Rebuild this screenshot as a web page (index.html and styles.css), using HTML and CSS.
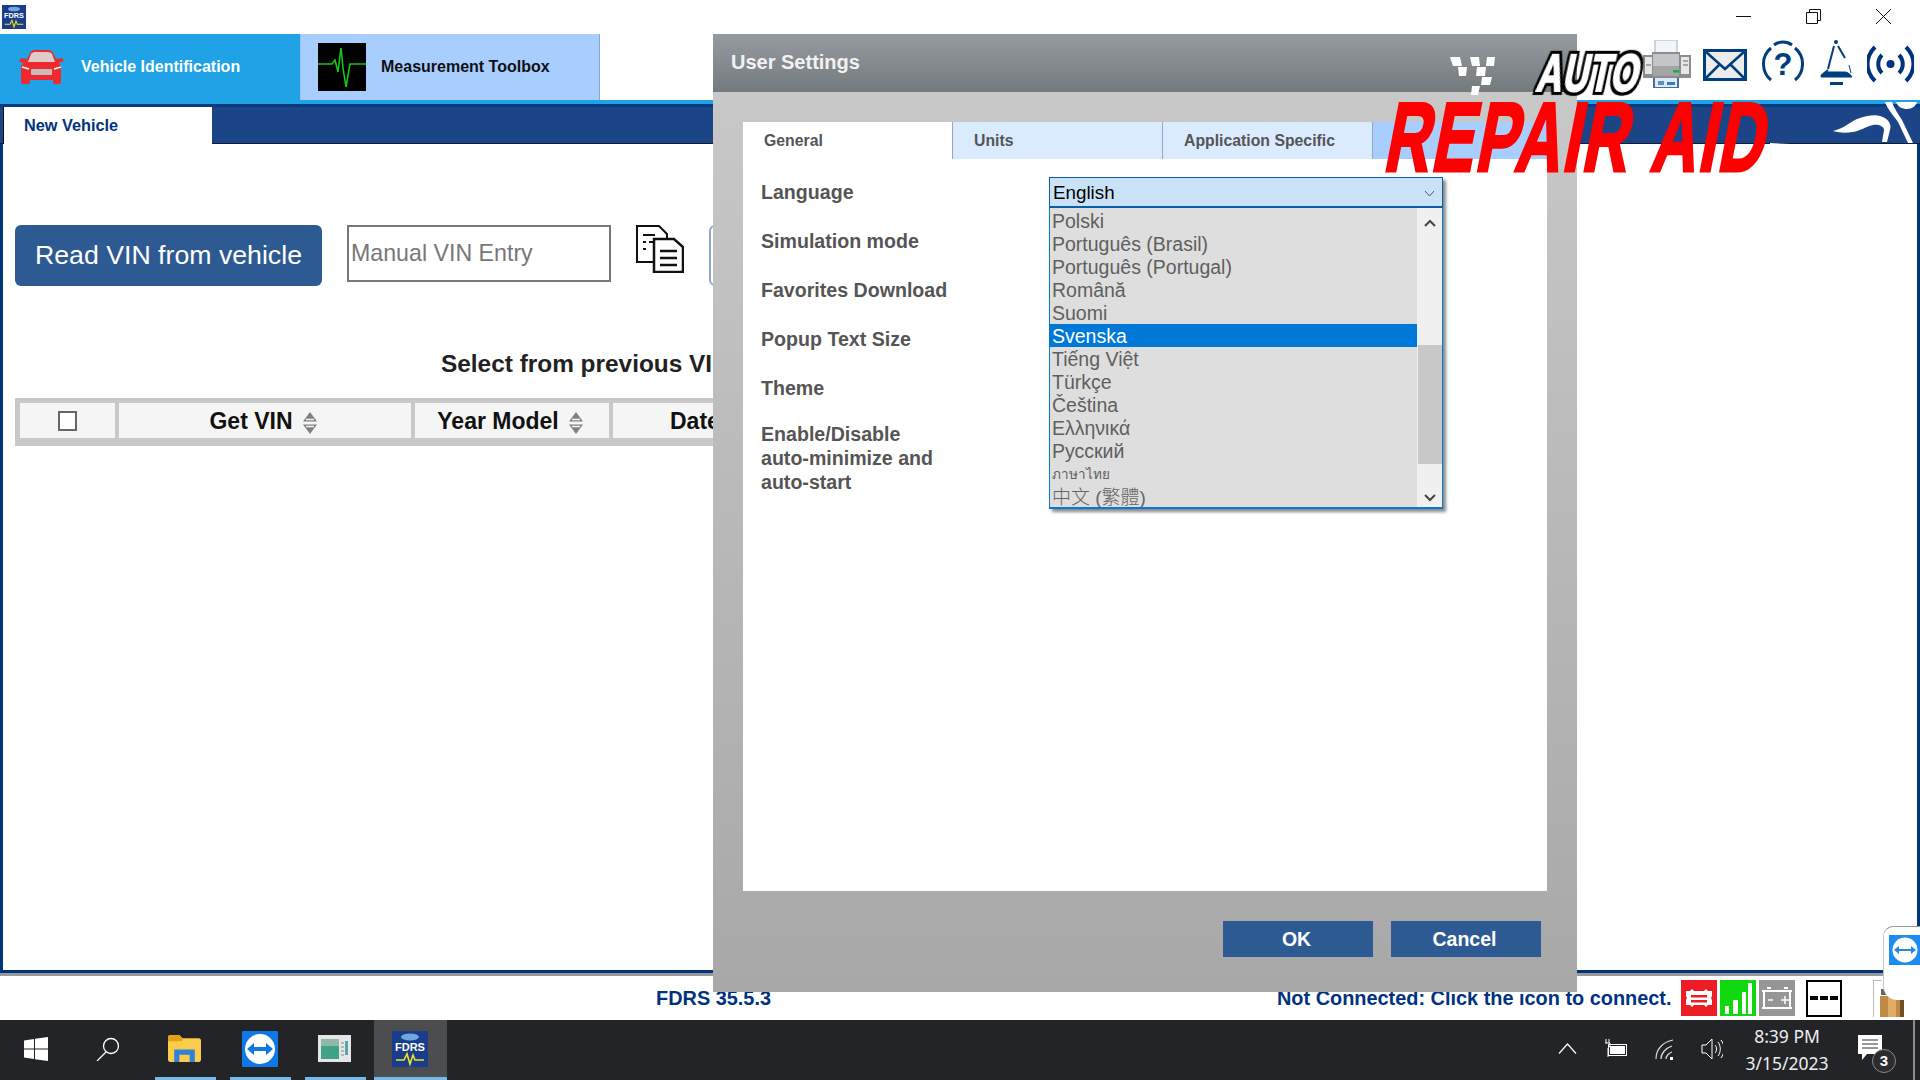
FILE: index.html
```html
<!DOCTYPE html>
<html lang="en">
<head>
<meta charset="utf-8">
<title>FDRS</title>
<link rel="stylesheet" href="styles.css">
</head>
<body>
<div class="app">
  <header class="titlebar">
    <svg class="favicon" viewBox="0 0 36 36"><rect width="36" height="36" fill="#1a3c8c"/><ellipse cx="18" cy="6" rx="9" ry="3.5" fill="#6fa6dc"/><text x="18" y="20" class="logo-text">FDRS</text><path d="M4 29h8l3-6 3 10 3-9 2 5h9" fill="none" stroke="#f4e21e" stroke-width="1.6"/></svg>
    <div class="winctl">
      <svg class="winbtn" viewBox="0 0 15 15"><path d="M0 7.5h15" stroke="#111" fill="none"/></svg>
      <svg class="winbtn" viewBox="0 0 15 15"><path d="M.5 3.5h11v11H.5zM3.5 3.5V.5h11v11h-3" stroke="#111" fill="none"/></svg>
      <svg class="winbtn" viewBox="0 0 15 15"><path d="M0 0l15 15M15 0L0 15" stroke="#111" fill="none"/></svg>
    </div>
  </header>

  <nav class="nav">
    <div class="navtab navtab-active">
      <svg class="car" viewBox="0 0 45 34"><path d="M8 9l3-6c1-2 3-3 5-3h13c2 0 4 1 5 3l3 6 6-1 2 3-5 2 2 4v15c0 1-1 2-2 2h-4c-1 0-2-1-2-2v-2H11v2c0 1-1 2-2 2H4c-1 0-2-1-2-2V17l2-4-4-2 2-3z" fill="#ee2a2e"/><path d="M9 12l3-8c.5-1 2-2 4-2h13c2 0 3.500 1 4 2l3 8z" fill="#dccccc"/><rect x="12" y="19" width="21" height="6" rx="1" fill="#c9bcbc"/><path d="M3 17l7 2M42 17l-7 2" stroke="#fff" stroke-width="1.500"/></svg>
      <span class="navtab-label navtab-label-light">Vehicle Identification</span>
    </div>
    <div class="navtab navtab-idle">
      <svg class="ekg" viewBox="0 0 48 48"><rect width="48" height="48" fill="#000"/><path d="M0 21h14l3-4 3 12 3-24 2 20 3 19 4-23h16" fill="none" stroke="#12c81a" stroke-width="1.600"/></svg>
      <span class="navtab-label">Measurement Toolbox</span>
    </div>
    <div class="toolicons">
      <svg class="ti ti-print" viewBox="0 0 49 48"><rect x="12" y="0" width="22" height="15" fill="#f2f4f8" stroke="#9db4cf" stroke-width="1"/><rect x="11" y="33" width="24" height="15" fill="#dfe9f3" stroke="#44709f" stroke-width="2"/><rect x="19" y="34" width="12" height="4" fill="#e81c24"/><rect x="15" y="41" width="6" height="4" fill="#5d8fbd"/><rect x="24" y="42" width="8" height="3" fill="#2d7fd0"/><path d="M9 12h28v3h11v23H0V15h9z" fill="#8a8d8e"/><path d="M10 14h26v22H10z" fill="#c3c5c6"/><path d="M10 26h26v10H10z" fill="#a3a5a6"/><rect x="30" y="30" width="6" height="2.500" fill="#14b33a"/><path d="M2 17h7v17H2zM38 17h8v17h-8z" fill="#e6e6e6"/><path d="M40 21h5M40 25h5M3 25h5" stroke="#666"/></svg>
      <svg class="ti ti-mail" viewBox="0 0 44 48"><rect x="1.500" y="10.500" width="41" height="29" fill="#ececec" stroke="#003f7f" stroke-width="3"/><path d="M2 11l20 18 20-18M2 39l15-15M42 39L27 24" fill="none" stroke="#003f7f" stroke-width="2.500"/></svg>
      <svg class="ti ti-help" viewBox="0 0 44 48"><path d="M10 40C1 33-1 17 10 8M13 5C18 1 26 1 31 5M34 8c11 9 9 25 0 32" fill="none" stroke="#003f7f" stroke-width="3"/><text x="22" y="35" class="help-q">?</text></svg>
      <svg class="ti ti-bell" viewBox="0 0 33 48"><circle cx="16" cy="2" r="2" fill="#003f7f"/><path d="M14 6L8 29M1 36l7-6M18 6l7 12" fill="none" stroke="#003f7f" stroke-width="2"/><path d="M29 25l2 8M1 37c0-2 3-5 6-5h18c3 0 6 3 7 5z" fill="#003f7f" stroke="#003f7f" stroke-width="1"/><rect x="10" y="42" width="13" height="3" fill="#003f7f"/></svg>
      <svg class="ti ti-wifi" viewBox="0 0 47 48"><circle cx="23.500" cy="24" r="4" fill="#00337f"/><path d="M15 15c-5 5-5 13 0 18M32 15c5 5 5 13 0 18M8 7c-10 10-10 24 0 34M39 7c10 10 10 24 0 34" fill="none" stroke="#00337f" stroke-width="4"/></svg>
    </div>
  </nav>
  <div class="strip"></div>
  <div class="rule"></div>

  <div class="subbar">
    <div class="subtab">New Vehicle</div>
    <svg class="swoosh" viewBox="0 0 150 44"><path d="M63 29C75 26 80 20 87 17 95 14 105 12 110 14 118 16 122 22 120 28L117 40H112L114 28C114 24 108 22 103 23 95 25 90 29 83 30 76 31 70 31 63 29z" fill="#fff"/><path d="M115 0C118 8 124 14 128 20L138 41H143L132 18C128 12 124 6 122 0z" fill="#fff"/><path d="M126 0C128 5 132 7 137 7 142 7 146 4 147 0z" fill="#fff"/><path d="M0 41c30 2 70 2 100 1v2H0z" fill="#fff"/></svg>
  </div>

  <main class="content">
    <div class="vinrow">
      <button class="btn-read">Read VIN from vehicle</button>
      <input class="vin-input" placeholder="Manual VIN Entry">
      <svg class="copy" viewBox="0 0 48 48"><path d="M1 1h22l8 8v28H1z" fill="#fff" stroke="#111" stroke-width="2"/><path d="M7 10h12M7 17h3M13 17h10M7 24h3" stroke="#111" stroke-width="2"/><path d="M18 14h20l9 8v25H18z" fill="#fff" stroke="#111" stroke-width="2.500"/><path d="M24 26h17M24 33h17M24 40h17" stroke="#111" stroke-width="2.500"/></svg>
      <div class="btn-next"></div>
    </div>
    <h2 class="prev-title">Select from previous VIN</h2>
    <div class="vintable">
      <div class="th th-check"><span class="checkbox"></span></div>
      <div class="th th-get">Get VIN<svg class="sort" viewBox="0 0 14 22"><path d="M7 0l7 9.500H0zM7 22L0 12.500h14z" fill="#808080"/><path d="M3 7.500h8M3 14.500h8" stroke="#f5f5f5" stroke-width="1.500"/></svg></div>
      <div class="th th-year">Year Model<svg class="sort" viewBox="0 0 14 22"><path d="M7 0l7 9.500H0zM7 22L0 12.500h14z" fill="#808080"/><path d="M3 7.500h8M3 14.500h8" stroke="#f5f5f5" stroke-width="1.500"/></svg></div>
      <div class="th th-date">Date</div>
    </div>
  </main>
  <div class="graybar"></div>

  <footer class="status">
    <span class="st-version">FDRS 35.5.3</span>
    <span class="st-conn">Not Connected: Click the icon to connect.</span>
    <svg class="st-icon st-first" viewBox="0 0 36 36"><rect width="36" height="36" fill="#ee1c25"/><path d="M5 11h4l2-2 2 2h10l2-2 2 2h4v5l-1 2 1 2v5h-4l-2 2-2-2H13l-2 2-2-2H5v-5l1-2-1-2z" fill="#fff"/><path d="M10 15h16v2.500H10zM10 20h16v2.500H10z" fill="#ee1c25"/></svg>
    <svg class="st-icon st-gap" viewBox="0 0 36 36"><rect width="36" height="36" fill="#10d80e"/><rect x="5" y="26" width="4" height="8" fill="#fff"/><rect x="13" y="20" width="5" height="14" fill="#fff"/><rect x="22" y="12" width="4" height="22" fill="#fff"/><rect x="28" y="3" width="4" height="31" fill="#fff"/></svg>
    <svg class="st-icon st-gap" viewBox="0 0 36 36"><rect width="36" height="36" fill="#969696"/><path d="M3 11h30M8 8h4M25 8h4M5 12v15M31 12v15M3 28h30" fill="none" stroke="#fff" stroke-width="2"/><path d="M9 20h5M22 20h8M26 16v8" stroke="#fff" stroke-width="1.500"/></svg>
    <div class="st-dash"><i></i><i></i><i></i></div>
    <svg class="st-lock" viewBox="0 0 32 37"><path d="M.5 0v37M.5.5h8" stroke="#bbb" fill="none"/><rect x="8" y="9" width="5" height="6" fill="#666"/><rect x="24" y="12" width="4" height="4" fill="#666"/><rect x="7" y="16" width="24" height="21" fill="#c08a45"/><rect x="15" y="16" width="8" height="21" fill="#e0ac6a"/><rect x="27" y="16" width="4" height="21" fill="#6f5125"/></svg>
  </footer>

  <div class="taskbar">
    <div class="tb-start"><svg class="win" viewBox="0 0 24 24"><path d="M0 3.500l10-1.500v9.500H0zM11 1.800L24 0v11.500H11zM0 12.500h10V22L0 20.500zM11 12.500h13V24l-13-1.800z" fill="#fff"/></svg></div>
    <div class="tb-search"><svg class="glass" viewBox="0 0 24 24"><circle cx="15" cy="9" r="7.500" fill="none" stroke="#fff" stroke-width="1.300"/><path d="M10 15L1 24" stroke="#fff" stroke-width="1.300"/></svg></div>
    <div class="tb-app">
      <svg class="tb-ico" viewBox="0 0 32 26"><path d="M0 2c0-1 1-2 2-2h9l3 3h16c1 0 2 1 2 2v19c0 1-1 2-2 2H2c-1 0-2-1-2-2z" fill="#fbcb4b"/><path d="M0 2c0-1 1-2 2-2h9l3 3v3H0z" fill="#e4a118"/><path d="M6 26V14h20v12h-5v-7H11v7z" fill="#2f82d8"/></svg>
    </div>
    <div class="tb-app">
      <svg class="tb-ico tb-ico-lg" viewBox="0 0 36 36"><rect width="36" height="36" rx="1" fill="#0e78e6"/><circle cx="18" cy="18" r="15" fill="#fff"/><path d="M5 18l7-6v4h12v-4l7 6-7 6v-4H12v4z" fill="#0e78e6"/></svg>
    </div>
    <div class="tb-app">
      <svg class="tb-ico" viewBox="0 0 33 27"><rect width="33" height="27" fill="#e6e6e6"/><rect x="3" y="4" width="18" height="20" fill="#41a28a"/><rect x="3" y="4" width="18" height="7" fill="#8fb9a6"/><rect x="27" y="6" width="3" height="14" fill="#5aa5a8"/><path d="M23 8h3M23 12h3M23 16h3M23 20h3" stroke="#888"/></svg>
    </div>
    <div class="tb-app tb-app-on">
      <svg class="tb-ico tb-ico-lg" viewBox="0 0 36 36"><rect width="36" height="36" fill="#1a3c8c"/><ellipse cx="18" cy="6" rx="9" ry="3.500" fill="#6fa6dc"/><text x="18" y="20" class="logo-text">FDRS</text><path d="M4 29h8l3-6 3 10 3-9 2 5h9" fill="none" stroke="#f4e21e" stroke-width="1.600"/></svg>
    </div>
    <div class="tray">
      <svg class="tray-chev" viewBox="0 0 19 11"><path d="M1 10.500L9.500 1 18 10.500" fill="none" stroke="#fff" stroke-width="1.200"/></svg>
      <svg class="tray-batt" viewBox="0 0 24 20"><rect x="4.500" y="6.500" width="18" height="11" fill="none" stroke="#fff"/><rect x="6" y="8" width="15" height="8" fill="#fff"/><path d="M2 1v4M5 1v4M1 5h5v3l-2 2v9" stroke="#fff" fill="none"/></svg>
      <svg class="tray-wifi" viewBox="0 0 20 22"><path d="M1 20C1 10 8 3 18 1M6 20c0-6 5-11 11-13M11 20c0-3 3-6 6-7" fill="none" stroke="#ddd" stroke-width="1.200"/><rect x="15" y="18" width="3" height="3" fill="#fff"/></svg>
      <svg class="tray-vol" viewBox="0 0 22 22"><path d="M1 7h4l6-6v20l-6-6H1z" fill="none" stroke="#fff"/><path d="M14 7c2 2 2 6 0 8M17 4c3 4 3 10 0 14M20 2c4 5 4 13 0 18" fill="none" stroke="#fff"/></svg>
      <div class="clock"><span>8:39 PM</span><span>3/15/2023</span></div>
      <div class="notif">
        <svg class="notif-ico" viewBox="0 0 24 26"><path d="M0 0h24v19H9l-5 6v-6H0z" fill="#fff"/><path d="M4 5h16M4 9h16M4 13h16" stroke="#333"/></svg>
        <span class="notif-badge">3</span>
      </div>
    </div>
  </div>
</div>

<div class="tvtab">
  <svg class="tv-ico" viewBox="0 0 31 30"><rect width="31" height="30" fill="#1d8cf0"/><circle cx="16" cy="15" r="12.500" fill="#fff"/><path d="M5 15l5-4v3h12v-3l5 4-5 4v-3H10v3z" fill="#2a86e0"/></svg>
</div>

<section class="dialog">
  <div class="dialog-head">User Settings</div>
  <div class="dialog-body">
    <div class="panel">
      <div class="ptabs">
        <div class="ptab ptab-on">General</div>
        <div class="ptab">Units</div>
        <div class="ptab">Application Specific</div>
      </div>
      <div class="flabels">
        <div class="flabel">Language</div>
        <div class="flabel">Simulation mode</div>
        <div class="flabel">Favorites Download</div>
        <div class="flabel">Popup Text Size</div>
        <div class="flabel">Theme</div>
        <div class="flabel-multi">Enable/Disable<br>auto-minimize and<br>auto-start</div>
      </div>
      <div class="combo">
        <div class="combo-head"><span>English</span><svg class="chev" viewBox="0 0 11 7"><path d="M1 1l4.500 5L10 1" fill="none" stroke="#555"/></svg></div>
        <div class="combo-list">
          <ul class="items">
            <li>Polski</li>
            <li>Português (Brasil)</li>
            <li>Português (Portugal)</li>
            <li>Română</li>
            <li>Suomi</li>
            <li class="sel">Svenska</li>
            <li>Tiếng Việt</li>
            <li>Türkçe</li>
            <li>Čeština</li>
            <li>Ελληνικά</li>
            <li>Русский</li>
            <li class="thai">ภาษาไทย</li>
            <li class="cjk">中文 (繁體)</li>
          </ul>
          <div class="sbar">
            <svg class="sb-arrow" viewBox="0 0 12 8"><path d="M1 7l5-5 5 5" fill="none" stroke="#444" stroke-width="2"/></svg>
            <div class="sb-thumb"></div>
            <svg class="sb-arrow" viewBox="0 0 12 8"><path d="M1 1l5 5 5-5" fill="none" stroke="#444" stroke-width="2"/></svg>
          </div>
        </div>
      </div>
    </div>
    <div class="dialog-btns">
      <button class="dbtn">OK</button>
      <button class="dbtn">Cancel</button>
    </div>
  </div>
</section>

<div class="wm">
  <svg class="wm-check" viewBox="0 0 45 38"><path d="M0 0h10l2 9H3zM20 0h9l1 9h-8zM37 0h8l-1 9h-8zM8 10h9l-1 9H9zM27 10h9l-1 9h-9zM32 20h10l-2 8h-9zM22 29h8l-2 9h-7z" fill="#fff"/></svg>
  <span class="wm-auto">AUTO</span>
  <span class="wm-repair">REPAIR AID</span>
</div>
</body>
</html>
```
FILE: styles.css
```css
* { box-sizing: border-box; }
html, body { margin: 0; padding: 0; }
body { width: 1920px; height: 1080px; overflow: hidden; position: relative; background: #fff; font-family: "Liberation Sans", Arial, sans-serif; }
.app { display: flex; flex-direction: column; height: 1080px; }

.titlebar { height: 34px; flex: none; display: flex; align-items: flex-start; justify-content: space-between; padding: 5px 0 0 2px; }
.favicon { width: 24px; height: 24px; }
.logo-text { font: bold 11px "Liberation Sans", sans-serif; fill: #fff; text-anchor: middle; }
.winctl { display: flex; gap: 55px; margin: 4px 29px 0 0; }
.winbtn { width: 15px; height: 15px; }

.nav { height: 66px; flex: none; display: flex; }
.navtab { width: 300px; display: flex; align-items: center; }
.navtab-active { background: #1fa2e6; padding-left: 19px; gap: 17px; }
.navtab-idle { background: #a8cdff; padding-left: 17px; gap: 15px; border-right: 1px solid #8aa5c8; border-left: 1px solid #9cc2ef; }
.car { width: 45px; height: 34px; }
.ekg { width: 48px; height: 48px; margin-top: -1px; }
.navtab-label { font-size: 16px; font-weight: bold; color: #111; }
.navtab-label-light { color: #fff; }
.toolicons { margin-left: auto; display: flex; padding: 6px 6px 0 0; height: 54px; }
.ti { height: 48px; flex: none; }
.ti-print { width: 49px; }
.ti-mail { width: 44px; margin-left: 11px; }
.ti-help { width: 44px; margin-left: 14px; }
.ti-bell { width: 33px; margin-left: 15px; }
.ti-wifi { width: 47px; margin-left: 14px; }
.help-q { font: bold 31px "Liberation Sans", sans-serif; fill: #003f7f; text-anchor: middle; }

.strip { height: 4px; flex: none; background: #1fa2e6; }
.rule { height: 3px; flex: none; background: #0a3a80; }
.subbar { height: 37px; flex: none; background: #1b4587; border-bottom: 1px solid #101c30; position: relative; padding-left: 3px; }
.subtab { width: 209px; height: 37px; background: #fff; border-left: 1px solid #111; padding-left: 20px; font-size: 16.3px; font-weight: bold; color: #00337f; line-height: 37px; }
.swoosh { position: absolute; right: 0; top: -5px; width: 150px; height: 44px; overflow: hidden; }

.content { flex: 1; border-left: 3px solid #003478; border-right: 3px solid #003478; border-bottom: 3px solid #003478; padding: 81px 340px 0 12px; min-height: 0; }
.vinrow { display: flex; align-items: flex-start; }
.btn-read { width: 307px; height: 61px; border: 0; border-radius: 6px; background: #2e5a94; color: #fff; font: 26.7px "Liberation Sans", sans-serif; padding-bottom: 2px; }
.vin-input { width: 264px; height: 57px; margin-left: 25px; border: 2px solid #777; padding: 0 0 1px 2px; font: 23.2px "Liberation Sans", sans-serif; outline: 0; }
.vin-input::placeholder { color: #777; opacity: 1; }
.copy { width: 48px; height: 48px; margin-left: 25px; }
.btn-next { width: 240px; height: 61px; margin-left: 25px; background: #fff; border: 2px solid #8fa9cc; border-radius: 6px; }
.prev-title { margin: 64px 0 0 426px; font-size: 24.4px; line-height: 28px; font-weight: bold; color: #222; }
.vintable { margin-top: 20px; height: 48px; background: #c8c8c8; padding: 5px 5px 8px; display: grid; grid-template-columns: 95px 292px 194px 1fr; gap: 4px; }
.th { background: #f5f5f5; display: flex; align-items: center; justify-content: center; padding-top: 1px; font-size: 23px; font-weight: bold; color: #111; }
.th-get, .th-year { padding-right: 4px; }
.th-date { justify-content: flex-start; padding-left: 57px; }
.checkbox { width: 19px; height: 20px; border: 2px solid #666; background: #fff; }
.sort { width: 14px; height: 22px; margin-left: 10px; margin-top: 3px; }

.graybar { height: 3px; flex: none; background: #9a9a9e; }
.status { height: 44px; flex: none; display: flex; align-items: center; font-size: 19.9px; font-weight: bold; color: #00337f; }
.st-version { margin-left: 656px; }
.st-conn { margin-left: 506px; }
.st-icon { width: 36px; height: 36px; flex: none; }
.st-first { margin-left: 9px; }
.st-gap { margin-left: 3px; }
.st-dash { width: 36px; height: 37px; margin-left: 11px; border: 2px solid #000; display: flex; align-items: center; justify-content: center; gap: 2px; }
.st-dash i { width: 8px; height: 4px; background: #000; }
.st-lock { width: 32px; height: 37px; margin-left: 31px; }

.taskbar { height: 60px; flex: none; background: #232427; display: flex; align-items: stretch; }
.tb-start { width: 72px; display: flex; align-items: center; padding-left: 24px; }
.win { width: 24px; height: 24px; margin-top: -2px; }
.tb-search { width: 72px; display: flex; align-items: center; padding-left: 24px; }
.glass { width: 24px; height: 24px; margin-top: -2px; }
.tb-app { width: 61px; margin-left: 14px; border-bottom: 3px solid #76b9ed; display: flex; align-items: center; justify-content: center; padding-right: 2px; }
.tb-app:nth-child(3) { margin-left: 11px; }
.tb-app-on { width: 73px; margin-left: 8px; background: #4c4d4f; }
.tb-ico { width: 33px; height: 27px; }
.tb-ico-lg { width: 36px; height: 36px; }
.tray { margin-left: auto; display: flex; align-items: center; padding-right: 20px; border-right: 2px solid #8c8c8c; position: relative; color: #fff; margin-right: 5px; }
.tray-chev { width: 19px; height: 11px; margin-top: -4px; }
.tray-batt { width: 24px; height: 20px; margin-left: 27px; margin-top: -4px; }
.tray-wifi { width: 20px; height: 22px; margin-left: 27px; }
.tray-vol { width: 22px; height: 22px; margin-left: 26px; margin-top: -2px; }
.clock { width: 100px; margin-left: 14px; display: flex; flex-direction: column; align-items: center; gap: 4px; font: 17.5px/23px "Noto Sans", sans-serif; color: #eee; }
.notif { width: 45px; height: 50px; margin-left: 11px; position: relative; }
.notif-ico { width: 24px; height: 26px; position: absolute; left: 10px; top: 10px; }
.notif-badge { position: absolute; left: 24px; top: 24px; width: 24px; height: 24px; border: 1.500px solid #888; border-radius: 50%; background: #2c2c2e; font: bold 15px/21px "Liberation Sans", sans-serif; text-align: center; color: #fff; }

.tvtab { position: absolute; left: 1883px; top: 926px; width: 37px; height: 74px; background: #fff; border-left: 1px solid #c5c5c5; border-top: 1px solid #999; border-radius: 10px 0 0 14px; padding: 8px 0 0 5px; }
.tv-ico { width: 31px; height: 30px; display: block; }

.dialog { position: absolute; left: 713px; top: 34px; width: 864px; height: 958px; display: flex; flex-direction: column; }
.dialog-head { height: 58px; flex: none; background: linear-gradient(#969ba1, #737a7d); color: #f2f2f2; font-size: 20px; font-weight: bold; padding-left: 18px; line-height: 56px; }
.dialog-body { flex: 1; background: linear-gradient(#c8c8c8, #a8a8a8); padding: 30px 30px 0; display: flex; flex-direction: column; }
.panel { height: 769px; background: #fff; position: relative; flex: none; }
.ptabs { display: flex; height: 37px; background: #a8cdff; }
.ptab { width: 210px; background: #dbebff; border-right: 1px solid #9aa7b8; padding-left: 21px; font-size: 15.8px; font-weight: bold; line-height: 37px; color: #555; }
.ptab-on { background: #fff; }
.flabels { padding: 10px 0 0 18px; color: #555; font-size: 19.6px; font-weight: bold; }
.flabel { height: 49px; line-height: 47px; }
.flabel-multi { margin-top: 8px; line-height: 24px; }
.combo { position: absolute; left: 306px; top: 55px; width: 394px; box-shadow: 3px 3px 3px #8a8a8a; }
.combo-head { height: 31px; border: 2px solid #0a5ea8; border-width: 1px 1px 2px; background: #c9e2f8; display: flex; align-items: center; justify-content: space-between; padding: 2px 7px 0 3px; font-size: 18.8px; color: #000; }
.chev { width: 11px; height: 7px; }
.combo-list { height: 301px; display: flex; border: 1px solid #0a78d0; border-top: 0; border-bottom-width: 2px; background: #dedede; }
.items { list-style: none; margin: 0; padding: 1px 0 0; width: 367px; overflow: hidden; color: #5f5f5f; font-size: 19.5px; }
.items li { height: 23px; line-height: 25px; padding-left: 2px; white-space: nowrap; font-family: "Liberation Sans", "DejaVu Sans", "Noto Sans CJK TC", sans-serif; }
.items .sel { background: #0078d7; color: #fff; }
.items .thai { font-size: 13.5px; }
.items .cjk { font-family: "Liberation Sans", "Noto Sans CJK TC", sans-serif; font-size: 19px; font-weight: 300; color: #666; }
.sbar { width: 25px; background: #f0f0f0; display: flex; flex-direction: column; align-items: center; padding: 11px 0 5px; position: relative; }
.sb-arrow { width: 12px; height: 8px; }
.sb-thumb { position: absolute; left: 1px; right: 0; top: 137px; height: 119px; background: #c8c8c8; }
.sb-arrow:last-child { position: absolute; bottom: 5px; }
.dialog-btns { display: flex; justify-content: flex-end; gap: 18px; margin-top: 30px; padding-right: 6px; }
.dbtn { width: 150px; height: 36px; background: #2e5a94; border: 0; color: #fff; font: bold 19.5px "Liberation Sans", sans-serif; padding: 0 3px 0 0; }

.wm { position: absolute; left: 1380px; top: 40px; width: 400px; height: 140px; }
.wm-check { position: absolute; left: 70px; top: 17px; width: 45px; height: 38px; }
.wm-auto { position: absolute; left: 153px; top: 5px; font: bold 52px/56px "Liberation Sans", sans-serif; color: #fff; -webkit-text-stroke: 2px #fff; filter: drop-shadow(3px 0 0 #000) drop-shadow(-3px 0 0 #000) drop-shadow(0 3px 0 #000) drop-shadow(0 -3px 0 #000); transform: skewX(-12deg) scaleX(.68); transform-origin: left bottom; letter-spacing: 1px; }
.wm-repair { position: absolute; left: 0; top: 52px; font: bold 98px/90px "Liberation Sans", sans-serif; color: #f00; -webkit-text-stroke: 3px #f00; white-space: nowrap; letter-spacing: 3px; word-spacing: 6px; transform: skewX(-11deg) scaleX(.645); transform-origin: left bottom; }
```
